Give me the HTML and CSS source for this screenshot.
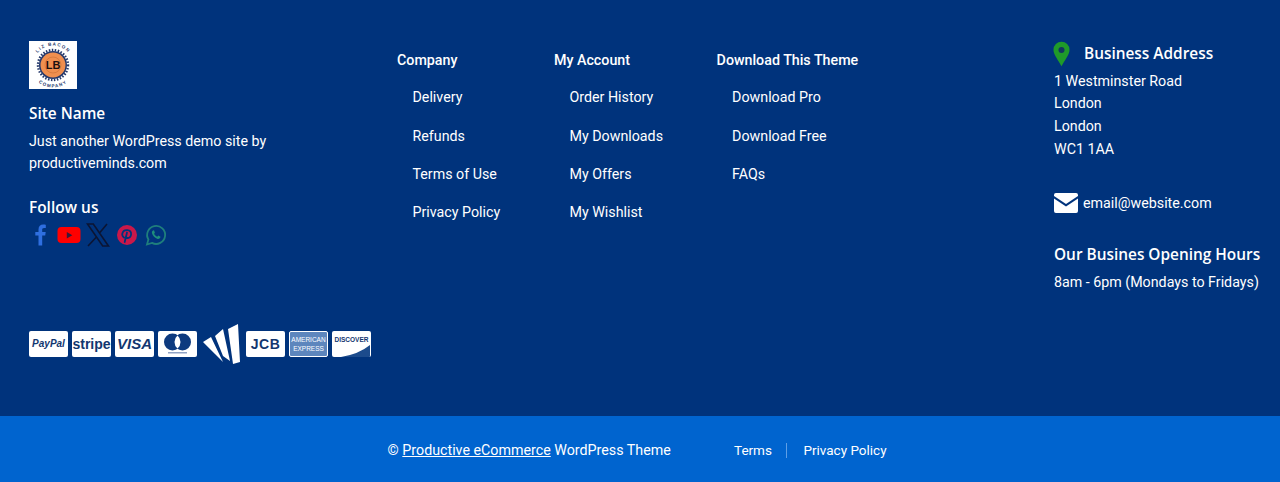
FILE: index.html
```html
<!DOCTYPE html>
<html lang="en">
<head>
<meta charset="utf-8">
<title>Footer</title>
<link rel="stylesheet" href="styles.css">
</head>
<body>
<footer>
  <div class="main">
    <div class="brand">
      <svg class="logo" viewBox="0 0 48 48" width="48" height="48">
        <rect width="48" height="48" fill="#fff"/>
        <circle cx="24" cy="24" r="15" fill="none" stroke="#24386b" stroke-width="2.400" stroke-dasharray="1.500 1.500"/>
        <circle cx="24" cy="24" r="14" fill="#24386b"/>
        <circle cx="24" cy="24" r="12.500" fill="#f08f4f"/>
        <circle cx="24" cy="24" r="8" fill="none" stroke="#c96f35" stroke-width="0.600"/>
        <text x="24" y="28" class="logo-lb">LB</text>
        <path id="arc" d="M4.500 24a19.500 19.500 0 0 1 39 0" fill="none"/>
        <text class="logo-arc"><textPath href="#arc" startOffset="50%">LIZ BACON</textPath></text>
        <path id="arc2" d="M1.500 24a22.500 22.500 0 0 0 45 0" fill="none"/>
        <text class="logo-arc"><textPath href="#arc2" startOffset="50%">COMPANY</textPath></text>
      </svg>
      <h4 class="site">Site Name</h4>
      <p class="tag">Just another WordPress demo site by productiveminds.com</p>
      <h4 class="follow">Follow us</h4>
      <div class="social">
        <svg width="24" height="24" viewBox="0 0 24 24"><path fill="#2f6fe0" d="M14.200 22.500V12.600h3l.5-3.600h-3.500V6.800c0-1 .4-1.800 1.900-1.800h1.700V1.700C17.300 1.600 16.200 1.500 15.200 1.500c-2.800 0-4.700 1.700-4.700 4.900V9H7.300v3.600h3.200v9.900z"/></svg>
        <svg width="24" height="24" viewBox="0 0 24 24"><rect x=".5" y="4" width="23" height="16" rx="4" fill="#f00"/><path d="M9.800 9l5.500 3.200-5.500 3.200z" fill="#3a1a3a"/></svg>
        <svg width="24" height="24" viewBox="0 0 24 24"><path fill="none" stroke="#0b1533" stroke-width="1.600" d="M1.500 1h5.800L22.500 23h-5.800zM21 1L13.300 10.300M10.700 13.800L2 23"/></svg>
        <svg width="24" height="24" viewBox="0 0 24 24"><circle cx="12" cy="12" r="10" fill="#c9184a"/><path fill="none" stroke="#00337c" stroke-width="1.800" stroke-linecap="round" d="M9 14.500c-1.500-1-2-2.200-1.700-3.700C7.800 8.300 10 7 12.300 7.200c2.500.3 4 2 3.800 4.200-.2 2.300-1.700 3.800-3.500 3.600-1-.1-1.500-.7-1.700-1.400M12 9.500L9.700 19"/></svg>
        <svg width="24" height="24" viewBox="0 0 24 24"><path fill="none" stroke="#1f7f7c" stroke-width="1.800" d="M3 21.500l1.400-5A9 9 0 1 1 8 19.900z"/><path fill="#1f8f7c" d="M9 7.500c-.8.500-1.300 1.500-1 2.800.6 2.500 3 5 5.700 5.600 1.200.2 2.300-.4 2.600-1.300l.2-.9-2.300-1.100-.9 1.100c-1.400-.5-2.600-1.700-3.200-3l.8-1-.9-2.400z"/></svg>
      </div>
      <div class="cards">
        <span class="card paypal">PayPal</span>
        <span class="card stripe">stripe</span>
        <span class="card visa">VISA</span>
        <span class="card mc"><svg width="37" height="24" viewBox="0 0 37 24"><circle cx="13.500" cy="10" r="8.500" fill="#0d3a7f"/><circle cx="23.500" cy="10" r="8.500" fill="#0d3a7f"/><path d="M18.500 3.500a8.500 8.500 0 0 1 0 13a8.500 8.500 0 0 1 0-13z" fill="#fff"/><rect x="9" y="20" width="19" height="1.500" fill="#8fa2c4"/></svg></span>
        <svg class="wlogo" width="38" height="40" viewBox="0 0 38 40"><path fill="#fff" d="M0 18l8-5 12 25-8-8zM12 12l8-7 7 32-7-5zM25 5L35 0l2 38-7 2z"/></svg>
        <span class="card jcb">JCB</span>
        <span class="card amex"><span>AMERICAN</span><span>EXPRESS</span></span>
        <span class="card disc">DISCOVER<svg class="disc-band" width="37" height="12" viewBox="0 0 37 12"><path d="M37 0v12H8Q26 9 37 0z" fill="#1c4b8c"/></svg></span>
      </div>
    </div>
    <nav class="menus">
      <div class="menu">
        <h5>Company</h5>
        <ul>
          <li>Delivery</li><li>Refunds</li><li>Terms of Use</li><li>Privacy Policy</li>
        </ul>
      </div>
      <div class="menu">
        <h5>My Account</h5>
        <ul>
          <li>Order History</li><li>My Downloads</li><li>My Offers</li><li>My Wishlist</li>
        </ul>
      </div>
      <div class="menu">
        <h5>Download This Theme</h5>
        <ul>
          <li>Download Pro</li><li>Download Free</li><li>FAQs</li>
        </ul>
      </div>
    </nav>
    <aside class="contact">
      <div class="addr-head">
        <svg width="17" height="26" viewBox="0 0 18 26"><path fill="#1f9a2a" d="M9 0a8.500 8.500 0 0 1 8.500 8.500C17.500 14 12 20 9 26 6 20 .5 14 .5 8.500A8.500 8.500 0 0 1 9 0z"/><circle cx="9" cy="8.700" r="3.200" fill="#12365f"/></svg>
        <h4>Business Address</h4>
      </div>
      <p class="addr">1 Westminster Road<br>London<br>London<br>WC1 1AA</p>
      <div class="mail">
        <svg width="24" height="20" viewBox="0 0 25 20" preserveAspectRatio="none"><path fill="#fff" d="M2 0h21a2 2 0 0 1 2 2v1L12.500 11 0 3V2a2 2 0 0 1 2-2zM0 5.500l12.500 8 12.500-8V18a2 2 0 0 1-2 2H2a2 2 0 0 1-2-2z"/></svg>
        <span>email@website.com</span>
      </div>
      <h4 class="hours-head">Our Busines Opening Hours</h4>
      <p class="hours">8am - 6pm (Mondays to Fridays)</p>
    </aside>
  </div>
  <div class="bottom">
    <p class="copy">© <a href="#">Productive eCommerce</a> WordPress Theme</p>
    <div class="legal"><span class="terms">Terms</span><span>Privacy Policy</span></div>
  </div>
</footer>
</body>
</html>
```
FILE: styles.css
```css
* { box-sizing: border-box; }
html, body { margin: 0; padding: 0; }
body {
  background: #00337c;
  color: #fff;
  font-family: Roboto, "Liberation Sans", sans-serif;
  font-size: 14.25px;
  line-height: 22.5px;
}
h4, h5, p, ul { margin: 0; padding: 0; }
ul { list-style: none; }

.main {
  display: flex;
  height: 416px;
  padding: 41px 0 0 29px;
}

.brand { width: 368px; }
.logo { display: block; }
.logo-lb { font: 700 11px "Liberation Sans", sans-serif; text-anchor: middle; fill: #1a1010; }
.logo-arc { font: 700 4.500px "Liberation Sans", sans-serif; text-anchor: middle; fill: #24386b; letter-spacing: 1.200px; }

h4 {
  font-family: "Open Sans", sans-serif;
  font-weight: 600;
  font-size: 15.4px;
  line-height: 22px;
}
.site { margin-top: 14px; }
.tag { width: 250px; margin-top: 5px; line-height: 22px; }
.follow { margin-top: 23px; }

.social { display: flex; align-items: center; gap: 5px; margin: 4px 0 0 -1px; height: 24px; }

.cards { display: flex; align-items: center; gap: 4px; margin-top: 77px; height: 40px; }
.card {
  width: 39px;
  height: 26px;
  border-radius: 2px;
  background: #fff;
  color: #12366f;
  font-family: "Liberation Sans", sans-serif;
  font-weight: 700;
  display: flex;
  flex-direction: column;
  align-items: center;
  justify-content: center;
  overflow: hidden;
  position: relative;
}
.paypal { font-size: 10px; font-style: italic; }
.stripe { font-size: 14px; }
.visa { font-size: 15px; font-style: italic; }
.jcb { font-size: 14px; letter-spacing: .5px; }
.mc svg { display: block; }
.wlogo { margin: 0 1px 0 2px; flex: none; }
.amex { background: #5d86bd; color: #fff; font-size: 6.500px; line-height: 9px; font-weight: 400; border: 1px solid #fff; }
.disc { font-size: 6.500px; line-height: 9px; justify-content: flex-start; padding-top: 4px; }
.disc-band { position: absolute; left: 1px; bottom: 0; }

.menus { display: flex; width: 657px; padding-top: 8px; }
.menu h5 {
  font-family: Roboto, sans-serif;
  font-weight: 500;
  font-size: 14.25px;
  line-height: 22px;
}
.menu li { margin: 16.33px 0 0 15.5px; line-height: 22px; }
.menu li:first-child { margin-top: 15.4px; }
.menu:nth-child(1) { width: 157px; }
.menu:nth-child(2) { width: 162.6px; }

.contact { flex: none; }
.addr-head { display: flex; align-items: center; gap: 14px; margin-left: -1px; height: 26px; }
.addr-head h4 { margin-bottom: 1px; }
.addr { margin-top: 2.6px; line-height: 22.7px; }
.mail { display: flex; align-items: center; gap: 5px; margin-top: 32.6px; height: 20px; }
.hours-head { margin-top: 31px; }
.hours { margin-top: 5px; }

.bottom {
  background: #0064cf;
  height: 66px;
  display: flex;
  align-items: center;
  padding: 3px 0 0 387.6px;
}
.copy { width: 346.4px; }
.copy a { color: #fff; }
.legal { display: flex; align-items: center; font-size: 13.5px; }
.terms { padding-right: 15px; margin-right: 16.5px; position: relative; }
.terms::after { content: ""; position: absolute; right: 0; top: 4px; bottom: 4px; width: 1px; background: #5f9fe6; }
```
